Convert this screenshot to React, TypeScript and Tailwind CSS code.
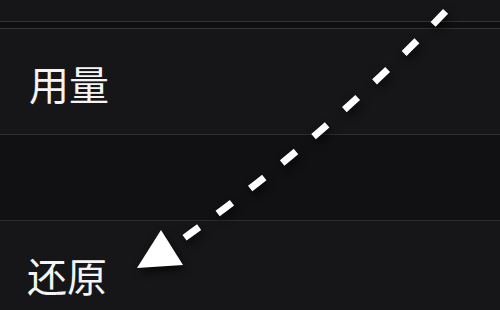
export default function App() {
  const font = { fontFamily: '"Noto Sans CJK SC", "Noto Sans", sans-serif' };
  return (
    <div className="relative w-[500px] h-[310px] overflow-hidden bg-[#161618]" style={font}>
      <div className="flex flex-col">
        <div className="h-[21px] bg-[#161618]" />
        <div className="h-[8px] bg-[#0f0f11] border-y border-[#343436]" />
        <div className="h-[105px] flex items-center pl-[29px] pt-[3px] bg-[#161618]">
          <span className="text-[40px] leading-none font-normal text-[#f4f4f4]">用量</span>
        </div>
        <div className="h-[87px] bg-[#111113] border-y border-[#2e2e30]" />
        <div className="h-[106px] flex items-center pl-[27px] pt-[1px] bg-[#161618]">
          <span className="text-[40px] leading-none font-normal text-[#f4f4f4]">还原</span>
        </div>
      </div>
      <svg
        className="absolute left-0 top-0"
        width="500"
        height="310"
        viewBox="0 0 500 310"
        style={{ filter: "drop-shadow(2px 4px 4px rgba(0,0,0,0.7))" }}
      >
        <path
          d="M 447 10 Q 320 143 170 248"
          fill="none"
          stroke="#ffffff"
          strokeWidth="7"
          strokeDasharray="18 23"
          strokeDashoffset="-2"
        />
        <polygon points="137,268 161,230 183,265" fill="#ffffff" />
      </svg>
    </div>
  );
}
